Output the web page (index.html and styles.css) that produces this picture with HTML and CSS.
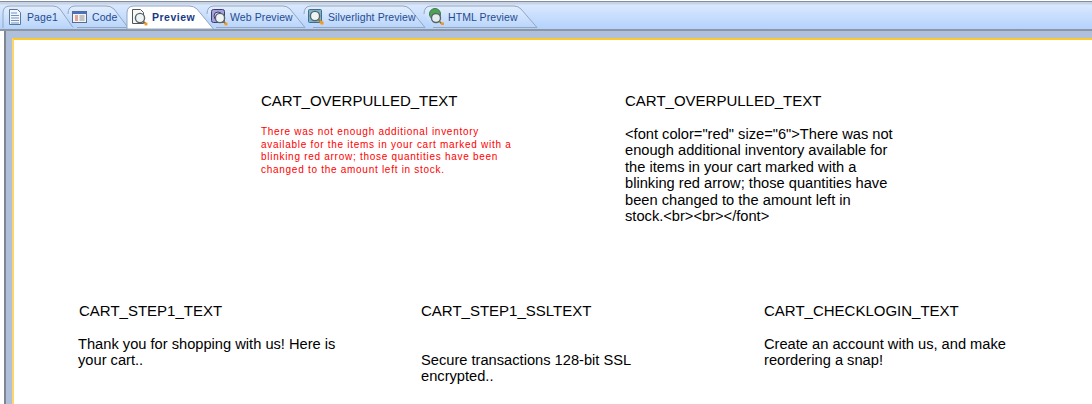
FILE: index.html
```html
<!DOCTYPE html>
<html lang="en">
<head>
<meta charset="utf-8">
<title>Preview</title>
<link rel="stylesheet" href="styles.css">
</head>
<body>
<svg class="defs" width="0" height="0" aria-hidden="true">
  <defs>
    <linearGradient id="tabfill" x1="0" y1="0" x2="0" y2="1">
      <stop offset="0" stop-color="#e3eefd"/>
      <stop offset="1" stop-color="#b9d5fb"/>
    </linearGradient>
    <g id="lens">
      <circle cx="10" cy="10" r="4.6" fill="#eef3f4" stroke="#59636b" stroke-width="1.4"/>
      <path d="M13 13l2.600 2.600" stroke="#8a6a35" stroke-width="1.600"/>
      <path d="M14.600 14.600h2.800v2.800h-2.800z" fill="#f09a24"/>
    </g>
  </defs>
</svg>
<header class="tabbar">
  <div class="tab tab-page">
    <svg class="shape" viewBox="0 0 70 23" preserveAspectRatio="none"><path d="M0 23V8Q0 1 7 1H50Q54 1 57 4L70 22.500" fill="url(#tabfill)" stroke="#94a6c2"/></svg>
    <svg class="icon" viewBox="0 0 18 18"><path d="M3.500 1.500h8l3 3v12h-11z" fill="#f3f6fb" stroke="#5d7696"/><path d="M5 5h6M5 7.500h8M5 10h8M5 12.500h8M5 15h8" stroke="#6e93c6"/></svg>
    <span>Page1</span>
  </div>
  <div class="tab tab-code">
    <svg class="shape" viewBox="0 0 60 23" preserveAspectRatio="none"><path d="M0 9Q0 1 7 1H38Q43 1 46 4L60 22.500H9" fill="url(#tabfill)" stroke="#94a6c2"/></svg>
    <svg class="icon" viewBox="0 0 18 18"><rect x="1.500" y="3.500" width="14" height="11" fill="#f6f4f0" stroke="#566c95"/><path d="M2 4h13v2H2z" fill="#4a70c0"/><path d="M4 8h3M4 10h3M4 12h3" stroke="#c9563c"/><path d="M8.500 8h5M8.500 10h5M8.500 12h5" stroke="#8b8f99"/></svg>
    <span>Code</span>
  </div>
  <div class="tab tab-active">
    <svg class="shape" viewBox="0 0 86 24" preserveAspectRatio="none"><path d="M0 24V8Q0 1 7 1H62Q67 1 70 4L86 23.500V24Z" fill="#fff" stroke="#94a6c2"/></svg>
    <svg class="icon" viewBox="0 0 18 18"><path d="M2.500 1.500h8l3 3v11h-11z" fill="#f7f7f5" stroke="#4f5660"/><use href="#lens"/></svg>
    <span>Preview</span>
  </div>
  <div class="tab tab-web">
    <svg class="shape" viewBox="0 0 98 23" preserveAspectRatio="none"><path d="M0 9Q0 1 7 1H76Q80 1 83 4L98 22.500H9" fill="url(#tabfill)" stroke="#94a6c2"/></svg>
    <svg class="icon" viewBox="0 0 18 18"><rect x="1.500" y="1.500" width="13" height="13" rx="2" fill="#a6a2d8" stroke="#3d3a78"/><circle cx="8" cy="8" r="4" fill="#d8d6ea" stroke="#3d3a78"/><use href="#lens"/></svg>
    <span>Web Preview</span>
  </div>
  <div class="tab tab-silver">
    <svg class="shape" viewBox="0 0 121 23" preserveAspectRatio="none"><path d="M0 9Q0 1 7 1H99Q103 1 106 4L121 22.500H9" fill="url(#tabfill)" stroke="#94a6c2"/></svg>
    <svg class="icon" viewBox="0 0 18 18"><rect x="1.500" y="1.500" width="13" height="13" rx="1" fill="#7fb1c8" stroke="#3c6f8a"/><use href="#lens" transform="translate(-2 -2)"/><path d="M13.500 13.500h3v3h-3z" fill="#f09a24"/></svg>
    <span>Silverlight Preview</span>
  </div>
  <div class="tab tab-html">
    <svg class="shape" viewBox="0 0 113 23" preserveAspectRatio="none"><path d="M0 9Q0 1 7 1H90Q94 1 97 4L113 22.500H9" fill="url(#tabfill)" stroke="#94a6c2"/></svg>
    <svg class="icon" viewBox="0 0 18 18"><circle cx="8" cy="6" r="5.500" fill="#4fa34f" stroke="#3a7a55"/><circle cx="9" cy="10" r="4.500" fill="#e6edf0" stroke="#59636b" stroke-width="1.400"/><path d="M12 13l3 3" stroke="#8a6a35" stroke-width="1.600"/><path d="M14 14.500h3v2.500h-3z" fill="#f09a24"/></svg>
    <span>HTML Preview</span>
  </div>
</header>
<div class="frame">
  <main class="canvas">
    <section class="row row-top">
      <article class="cell cell-a">
        <h2>CART_OVERPULLED_TEXT</h2>
        <p class="warn">There was not enough additional inventory<br>available for the items in your cart marked with a<br>blinking red arrow; those quantities have been<br>changed to the amount left in stock.</p>
      </article>
      <article class="cell cell-b">
        <h2>CART_OVERPULLED_TEXT</h2>
        <p>&lt;font color="red" size="6"&gt;There was not<br>enough additional inventory available for<br>the items in your cart marked with a<br>blinking red arrow; those quantities have<br>been changed to the amount left in<br>stock.&lt;br&gt;&lt;br&gt;&lt;/font&gt;</p>
      </article>
    </section>
    <section class="row row-bottom">
      <article class="cell cell-c">
        <h2>CART_STEP1_TEXT</h2>
        <p>Thank you for shopping with us! Here is<br>your cart..</p>
      </article>
      <article class="cell cell-d">
        <h2>CART_STEP1_SSLTEXT</h2>
        <p class="gap">Secure transactions 128-bit SSL<br>encrypted..</p>
      </article>
      <article class="cell cell-e">
        <h2>CART_CHECKLOGIN_TEXT</h2>
        <p>Create an account with us, and make<br>reordering a snap!</p>
      </article>
    </section>
  </main>
</div>
</body>
</html>
```
FILE: styles.css
```css
* { box-sizing: border-box; }
html, body { margin: 0; padding: 0; }
body {
  width: 1092px;
  height: 404px;
  overflow: hidden;
  background: #fff;
  font-family: "Liberation Sans", Arial, sans-serif;
  display: flex;
  flex-direction: column;
}
.defs { position: absolute; }
.tabbar {
  height: 31px;
  flex: none;
  display: flex;
  align-items: flex-end;
  padding: 0 0 2px 3px;
  background: linear-gradient(#fff 0, #fff 1px, #7f8ea6 1px, #7f8ea6 2px, #c9d3e2 2px, #c9d3e2 4px, #d9e8fe 5px, #b3d2fd 29px);
  border-bottom: 2px solid #8d96a3;
}
.tab {
  position: relative;
  height: 23px;
  flex: none;
  display: flex;
  align-items: center;
  gap: 3px;
  padding-left: 3px;
  font-size: 10.500px;
  letter-spacing: 0.100px;
  color: #1f4c92;
  margin-bottom: -1px;
  white-space: nowrap;
}
.tab .shape { position: absolute; inset: 0; width: 100%; height: 100%; overflow: visible; }
.tab .icon { position: relative; width: 18px; height: 18px; flex: none; }
.tab span { position: relative; }
.tab-page { width: 70px; }
.tab-code { width: 60px; margin-left: -5px; }
.tab-active { width: 86px; height: 24px; margin-left: -1px; z-index: 2; margin-bottom: -2px; gap: 4px; font-weight: bold; letter-spacing: 0.500px; color: #173a86; }
.tab-web { width: 98px; margin-left: -6px; gap: 2px; }
.tab-silver { width: 121px; margin-left: -1px; }
.tab-html { width: 113px; margin-left: -1px; }
.frame {
  flex: 1;
  padding: 7px 0 0 6px;
  margin-left: 4px;
  background: #b0c0da;
  border-left: 2px solid #7f8690;
  display: flex;
}
.canvas {
  flex: 1;
  background: #fff;
  border-top: 2px solid #fdca2e;
  border-left: 2px solid #fdd66a;
  padding-top: 51px;
}
.row { display: flex; }
.row-top { height: 210px; padding-left: 247px; }
.row-bottom { padding-left: 65px; }
.cell h2 {
  margin: 0 0 15px;
  font-size: 15px;
  line-height: 20px;
  font-weight: normal;
  color: #000;
  white-space: nowrap;
}
.cell p {
  margin: 0;
  font-size: 14.670px;
  line-height: 16.400px;
  color: #000;
  white-space: nowrap;
}
.cell-a { width: 364px; }
.cell p.warn { font-size: 10px; line-height: 12.700px; letter-spacing: 0.720px; color: #f00; margin-top: 6px; }
.cell-c { width: 342px; }
.cell-c p { margin-left: -1px; }
.cell-d { width: 343px; }
.cell p.gap { margin-top: 31px; }
```
